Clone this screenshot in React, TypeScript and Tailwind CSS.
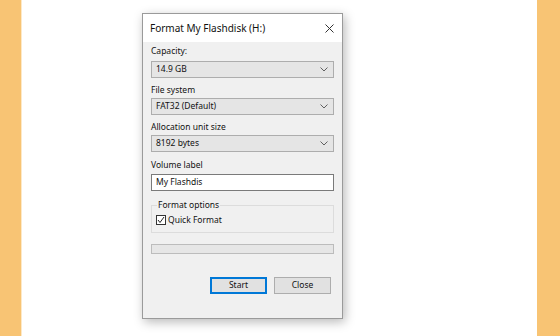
import React from "react"

const font = { fontFamily: '"Noto Sans", "Segoe UI", sans-serif' }

function Chevron() {
  return (
    <svg width="8" height="5" viewBox="0 0 8 5" className="shrink-0">
      <path d="M0.5 0.5 L4 4 L7.5 0.5" fill="none" stroke="#606060" strokeWidth="1" />
    </svg>
  )
}

function Combo({ value }: { value: string }) {
  return (
    <div className="flex h-[17px] items-center justify-between border border-[#adadad] bg-[#e5e5e5] pl-[4px] pr-[5px] text-[8.5px] leading-none text-[#111]">
      <span>{value}</span>
      <Chevron />
    </div>
  )
}

function Label({ text, className }: { text: string; className?: string }) {
  return <div className={"h-[12px] text-[8.5px] leading-[12px] text-[#111] " + (className ?? "")}>{text}</div>
}

export default function App() {
  return (
    <div className="flex h-[336px] w-[560px] overflow-hidden" style={font}>
      <div className="w-[21px] bg-[#f8c474]" />
      <div className="w-[1px] bg-[#fde9c8]" />
      <div className="flex-1 bg-white pl-[120px] pt-[13px]">
        <div className="flex h-[306px] w-[201px] flex-col border border-[#9a9a9a] bg-[#f0f0f0] shadow-[2px_3px_10px_rgba(0,0,0,0.28)]">
          {/* title bar */}
          <div className="flex h-[28px] items-center justify-between bg-white pl-[7px] pr-[8px]">
            <span className="text-[10px] text-[#111]">Format My Flashdisk (H:)</span>
            <svg width="9" height="9" viewBox="0 0 9 9">
              <path d="M0.5 0.5 L8.5 8.5 M8.5 0.5 L0.5 8.5" stroke="#333" strokeWidth="1" />
            </svg>
          </div>
          {/* body */}
          <div className="flex flex-1 flex-col px-[8px]">
            <Label text="Capacity:" className="mt-[3px]" />
            <div className="mt-[4px]">
              <Combo value="14.9 GB" />
            </div>
            <Label text="File system" className="mt-[6px]" />
            <div className="mt-[2px]">
              <Combo value="FAT32 (Default)" />
            </div>
            <Label text="Allocation unit size" className="mt-[6px]" />
            <div className="mt-[2px]">
              <Combo value="8192 bytes" />
            </div>
            <Label text="Volume label" className="mt-[7px]" />
            <div className="mt-[3px] flex h-[17px] items-center border border-[#7a7a7a] bg-white pl-[4px] text-[8.5px] leading-none text-[#111]">
              My Flashdis
            </div>
            {/* group */}
            <div className="relative mt-[14px] h-[28px] border border-[#dcdcdc]">
              <span className="absolute left-[5px] top-[-7px] bg-[#f0f0f0] px-[1px] text-[8.5px] leading-[12px] text-[#111]">
                Format options
              </span>
              <div className="flex items-center gap-[2px] pl-[4px] pt-[9px]">
                <div className="flex h-[10px] w-[10px] items-center justify-center border border-[#333] bg-white">
                  <svg width="8" height="8" viewBox="0 0 8 8">
                    <path d="M1 4 L3 6.5 L7 1" fill="none" stroke="#222" strokeWidth="1" />
                  </svg>
                </div>
                <span className="text-[8.5px] leading-none text-[#111]">Quick Format</span>
              </div>
            </div>
            {/* progress */}
            <div className="mt-[11px] h-[10px] border border-[#bcbcbc] bg-[#e6e6e6]" />
            {/* buttons */}
            <div className="mt-[23px] flex justify-end gap-[7px] pr-[3px]">
              <div className="flex h-[17px] w-[57px] items-center justify-center border-2 border-[#0078d7] bg-[#e1e1e1] text-[8.5px] leading-none text-[#111]">
                Start
              </div>
              <div className="flex h-[17px] w-[57px] items-center justify-center border border-[#adadad] bg-[#e1e1e1] text-[8.5px] leading-none text-[#111]">
                Close
              </div>
            </div>
          </div>
        </div>
      </div>
      <div className="w-[23px] bg-[#f8c474]" />
    </div>
  )
}
